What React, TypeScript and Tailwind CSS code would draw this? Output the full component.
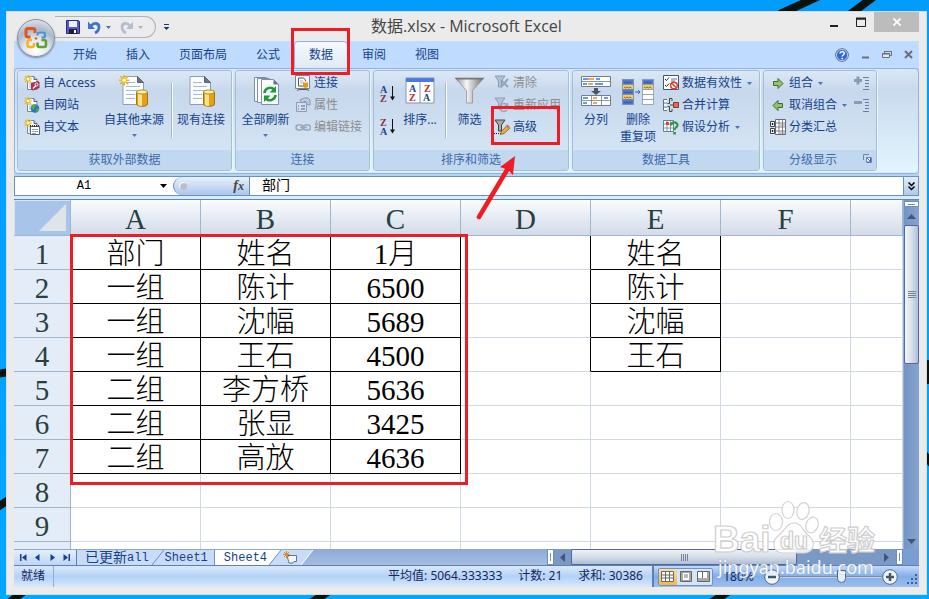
import type { ReactNode } from "react";
import { clsx } from "clsx";

// =============================================================================
// Spreadsheet window — title bar, ribbon, formula bar, grid, status bar
// =============================================================================

const UI_FONT = "font-['Noto_Sans','Noto_Sans_CJK_SC',sans-serif]";
const CELL_FONT = "font-['Liberation_Serif','Noto_Sans_CJK_SC',serif]";
const MONO_FONT = "font-['Liberation_Mono','Noto_Sans_CJK_SC',monospace]";

const TABS = ["开始", "插入", "页面布局", "公式", "数据", "审阅", "视图"];
const COLUMNS = ["A", "B", "C", "D", "E", "F", ""];

const ROWS: string[][] = [
  ["部门", "姓名", "1月", "", "姓名"],
  ["一组", "陈计", "6500", "", "陈计"],
  ["一组", "沈幅", "5689", "", "沈幅"],
  ["一组", "王石", "4500", "", "王石"],
  ["二组", "李方桥", "5636"],
  ["二组", "张显", "3425"],
  ["二组", "高放", "4636"],
  [],
  [],
  [],
];

// ---------------------------------------------------------------------------
// Icons
// ---------------------------------------------------------------------------

function Caret({ className = "text-[#4a76b5]" }: { className?: string }) {
  return (
    <svg width="5" height="3" viewBox="0 0 5 3" className={clsx("shrink-0", className)} aria-hidden>
      <path d="M0 0h5L2.5 3z" fill="currentColor" />
    </svg>
  );
}

function Spark() {
  return (
    <g stroke="#e9b81c" strokeWidth="1.2">
      <path d="M4 0v8M0 4h8M1 1l6 6M7 1L1 7" />
      <circle cx="4" cy="4" r="1.4" fill="#fff9c0" stroke="none" />
    </g>
  );
}

function SmallPage({ kind }: { kind: "access" | "web" | "text" }) {
  return (
    <svg width="16" height="16" viewBox="0 0 16 16" aria-hidden>
      <path d="M4 1.5h6l3 3v10H3.5V4z" fill="#fff" stroke="#77869c" />
      <path d="M10 1.5v3h3" fill="#c8d3e2" stroke="#56647a" />
      <path d="M5 8h5M5 10h5M5 12h4" stroke="#9fb0c8" />
      <Spark />
      {kind === "access" && (
        <g>
          <path d="M7 8l7-2 1.5 1v6L9 15.500l-2-1z" fill="#a8324e" />
          <path d="M9 13.500l3-3" stroke="#fff" strokeWidth="1.3" />
          <circle cx="12.5" cy="9.5" r="1.5" fill="none" stroke="#fff" />
        </g>
      )}
      {kind === "web" && (
        <g>
          <circle cx="11" cy="11.5" r="4.3" fill="#2f73c4" />
          <path d="M7.5 9.500c2-3 5-2 5-1s-2 1-2 3-2 1-3 0zM12 12l3-1c0 2-1 3.500-3 4z" fill="#4db044" />
        </g>
      )}
      {kind === "text" && (
        <g>
          <path d="M6.5 7.500h9v8h-9z" fill="#fff" stroke="#56647a" />
          <path d="M6 7h10" stroke="#333" strokeWidth="2" strokeDasharray="1 1" />
          <path d="M8 10.500h6M8 12.500h6M8 14.500h4" stroke="#8fa0b8" />
        </g>
      )}
    </svg>
  );
}

function DatabasePage({ spark = false }: { spark?: boolean }) {
  return (
    <svg width="32" height="32" viewBox="0 0 32 32" aria-hidden>
      <path d="M5 1.500h14.500l6 6V29.500H5z" fill="#fbfcff" stroke="#8d9db5" />
      <path d="M19.500 1.500v6h6z" fill="#66758c" stroke="#56647a" />
      <path d="M8 7.500h9M8 11.500h14M8 15.500h14M8 19.500h9M8 23.500h9" stroke="#a9b9d2" />
      <path d="M18.500 17v12c0 3 11 3 11 0V17z" fill="#e2a01b" stroke="#a8720c" />
      <path d="M20 18v12c1 1 3 1 4 1V18z" fill="#fbe08a" />
      <ellipse cx="24" cy="17" rx="5.5" ry="2" fill="#fff0ae" stroke="#c18a16" />
      {spark && (
        <g transform="translate(1 0) scale(1.3)">
          <Spark />
        </g>
      )}
    </svg>
  );
}

function RefreshAllIcon() {
  return (
    <svg width="32" height="32" viewBox="0 0 32 32" aria-hidden>
      <g fill="#fbfcff" stroke="#7f8fa8">
        <path d="M4.500 2.500h12l4 4v20h-16z" />
        <path d="M7.500 3.500h12l4 4v20h-16z" />
        <path d="M11.500 4.500h12l5 5v20h-17z" />
      </g>
      <path d="M23.500 4.500v5h5z" fill="#66758c" />
      <g fill="none" stroke="#1f9a3a" strokeWidth="2.6">
        <path d="M14.500 18a5.500 5.500 0 0 1 9.500-3.500" />
        <path d="M25.500 20a5.500 5.500 0 0 1-9.500 3.500" />
      </g>
      <path d="M26 11v6.500h-6.500zM14 27v-6.500h6.500z" fill="#1f9a3a" />
    </svg>
  );
}

function ConnectionsIcon() {
  return (
    <svg width="16" height="16" viewBox="0 0 16 16" aria-hidden>
      <path d="M.5.5h14v13H.5z" fill="#f4f7fc" stroke="#73839c" />
      <path d="M3.500 3h5l2 2v6h-7z" fill="#fff" stroke="#555" />
      <path d="M5 6h3M5 8h3" stroke="#9cb0cf" />
      <path d="M8 7h5v5c-1 1-4 1-5 0z" fill="#dd9b18" />
      <ellipse cx="10.5" cy="7" rx="2.5" ry="1" fill="#ffe89a" />
      <path d="M2 15.500l2-1h8l2 1" fill="none" stroke="#555" />
    </svg>
  );
}

function PropertiesIcon() {
  return (
    <svg width="16" height="16" viewBox="0 0 16 16" aria-hidden>
      <path d="M1.500 5.500h10v9h-10z" fill="#d5dfee" stroke="#8c9cb8" />
      <path d="M3 9h1M6 9h4M3 12h1M6 12h4" stroke="#7b8cab" strokeWidth="1.5" />
      <path d="M5 3l4-2h4l2 2v5h-2l-3-4-3 2z" fill="#bccbe1" stroke="#8797b4" />
    </svg>
  );
}

function LinkIcon() {
  return (
    <svg width="16" height="16" viewBox="0 0 16 16" aria-hidden fill="none" stroke="#98a6bd" strokeWidth="1.6">
      <rect x="1" y="6" width="7" height="5" rx="2.5" />
      <rect x="8.5" y="6" width="7" height="5" rx="2.5" />
      <path d="M5 8.500h7" />
    </svg>
  );
}

function SortIcon({ descending = false }: { descending?: boolean }) {
  const top = descending ? "Z" : "A";
  const bottom = descending ? "A" : "Z";
  return (
    <svg width="18" height="20" viewBox="0 0 18 20" className="overflow-visible" aria-hidden>
      <g className="font-['Liberation_Serif',serif] text-[10px] font-bold">
        <text x="0" y="9" fill={descending ? "#8e2c3c" : "#1f4490"}>{top}</text>
        <text x="0" y="18" fill={descending ? "#1f4490" : "#8e2c3c"}>{bottom}</text>
      </g>
      <path d="M12.500 2v13" stroke="#111" />
      <path d="M10 12.500h5l-2.500 4z" fill="#111" />
    </svg>
  );
}

function SortDialogIcon() {
  return (
    <svg width="32" height="28" viewBox="0 0 32 28" aria-hidden>
      <path d="M2 1h28v25H2z" fill="#fff" stroke="#8494b0" />
      <path d="M2 1h28v4H2z" fill="#4c7be0" />
      <path d="M16 5v21" stroke="#8494b0" />
      <g className="font-['Liberation_Serif',serif] text-[10px] font-bold">
        <text x="5" y="15" fill="#1f4490">A</text>
        <text x="5" y="24" fill="#b02c2c">Z</text>
        <text x="20" y="15" fill="#b02c2c">Z</text>
        <text x="19" y="24" fill="#1f4490">A</text>
      </g>
    </svg>
  );
}

function FunnelIcon() {
  return (
    <svg width="32" height="32" viewBox="0 0 32 32" aria-hidden>
      <defs>
        <linearGradient id="funnel" x1="0" x2="1">
          <stop offset="0" stopColor="#8b8b8b" />
          <stop offset=".4" stopColor="#f6f6f6" />
          <stop offset="1" stopColor="#6b6b6b" />
        </linearGradient>
      </defs>
      <path d="M1 3h29L18.500 15.500V28h-6V15.500z" fill="url(#funnel)" stroke="#8a8a8a" strokeWidth=".7" />
      <path d="M1 3h29l-1.500 1.500h-26z" fill="#777" />
    </svg>
  );
}

function SmallFunnel({ kind }: { kind: "clear" | "reapply" | "advanced" }) {
  const live = kind === "advanced";
  return (
    <svg width="16" height="16" viewBox="0 0 16 16" aria-hidden>
      <path
        d="M1 1h10L7.500 6v6h-3V6z"
        fill={live ? "#a8a8a8" : "#b4c2d8"}
        stroke={live ? "#444" : "#8b9ab3"}
      />
      {kind === "clear" && <path d="M7 5l7 7M14 4l-7 8" stroke="#94a3bb" strokeWidth="2" />}
      {kind === "reapply" && (
        <path d="M13 8a4 4 0 1 0 0 5M13.500 6v3h-3" fill="none" stroke="#98a7bf" strokeWidth="1.6" />
      )}
      {live && (
        <g>
          <path d="M0 14.500h8" stroke="#222" strokeDasharray="1 1" />
          <path d="M7 13l5.500-6 3 2.500-5.500 5-3.500 1z" fill="#efad3c" stroke="#7a5525" strokeWidth=".8" />
          <path d="M12 7l1.500-1.500 2.500 2.500-1 1.500z" fill="#d86868" />
        </g>
      )}
    </svg>
  );
}

function SplitColumnsIcon() {
  return (
    <svg width="32" height="32" viewBox="0 0 32 32" aria-hidden>
      <g fill="#fff" stroke="#6c7d98">
        <path d="M1.500 1.500h29v10h-29zM1.500 20.500h29v10h-29z" />
        <path d="M1.500 6.500h29M1.500 25.500h29M11.500 20.500v10M21.500 20.500v10" strokeWidth=".8" />
      </g>
      <path d="M3 4h5M16 4h4M3 9h4M15 9h8M3 23h5M24 23h4M3 28h4" stroke="#3d74de" strokeWidth="1.3" />
      <path d="M8 4h6M8 9h5M13 23h4M13 28h4" stroke="#ec8a1c" strokeWidth="1.3" />
      <path d="M14 13h4v3h3l-5 4-5-4h3z" fill="#4f555e" />
    </svg>
  );
}

function DuplicatesIcon() {
  const left = ["#5277cf", "#f8cf52", "#5277cf", "#f8cf52", "#5277cf"];
  const right = ["#5277cf", "#f8cf52", "#fff", "#fff", "#fff"];
  return (
    <svg width="34" height="32" viewBox="0 0 34 32" aria-hidden>
      {left.map((fill, i) => (
        <rect key={`l${i}`} x="1.5" y={4.5 + i * 5} width="11" height="5" fill={fill} stroke="#7788ad" strokeWidth=".8" />
      ))}
      {right.map((fill, i) => (
        <rect key={`r${i}`} x="21.5" y={4.5 + i * 5} width="11" height="5" fill={fill} stroke="#8797b4" strokeWidth=".8" />
      ))}
      {left.map((_, i) => (
        <path key={`z${i}`} d={`M3 ${7 + i * 5}l1.500 1 1.500-1 1.500 1 1.500-1 1.500 1`} fill="none" stroke="#2a4486" strokeWidth=".7" />
      ))}
      <path d="M23 7l1.500 1 1.500-1 1.500 1 1.500-1 1.500 1M23 12l1.500 1 1.500-1 1.500 1 1.500-1 1.500 1" fill="none" stroke="#2a4486" strokeWidth=".7" />
      <path d="M14 17h5M17 15l2 2-2 2" fill="none" stroke="#3d5fae" />
    </svg>
  );
}

function ValidationIcon() {
  return (
    <svg width="16" height="16" viewBox="0 0 16 16" aria-hidden>
      <path d="M.5.5h15v14H.5z" fill="#fff" stroke="#44546c" />
      <path d="M2 4l1.500 1.500L6 2.500M2 10l1.500 1.500L6 8.500" fill="none" stroke="#333" />
      <path d="M8 4h6M8 6h4" stroke="#5d7296" />
      <circle cx="11" cy="10.5" r="3.3" fill="#fff" stroke="#e0382a" strokeWidth="1.5" />
      <path d="M9 8.500l4 4" stroke="#e0382a" strokeWidth="1.5" />
    </svg>
  );
}

function ConsolidateIcon() {
  return (
    <svg width="16" height="16" viewBox="0 0 16 16" aria-hidden>
      <path d="M4 2.500H.5v11H4M.5 6H4M.5 10H4" fill="#fff" stroke="#5f6f88" />
      <path d="M9 1.500H6.500v5H4.500M9 14.500H6.500v-5H4.500M9 1.500V4M9 14.500V12" fill="none" stroke="#444" />
      <path d="M7 8h3" stroke="#444" />
      <path d="M10.500 5.500h5v5h-5z" fill="#ef6848" stroke="#7e392c" />
    </svg>
  );
}

function WhatIfIcon() {
  return (
    <svg width="16" height="16" viewBox="0 0 16 16" aria-hidden>
      <path d="M.5 1.500h10v11H.5z" fill="#fff" stroke="#6c7d98" />
      <path d="M.5 5h10M.5 9h10M4 1.500v11M7.500 1.500v11" stroke="#6c7d98" strokeWidth=".8" />
      <path d="M3 3h3v3H3z" fill="#e0462c" />
      <path d="M8 6.500c0-4 6.500-4 6.500-.5 0 2.500-3 2.500-3 5" fill="none" stroke="#2e963c" strokeWidth="2.2" />
      <path d="M10.300 13h2.500v2.500h-2.500z" fill="#2e963c" />
    </svg>
  );
}

function GreenArrow({ left = false }: { left?: boolean }) {
  return (
    <svg width="16" height="16" viewBox="0 0 16 16" className={clsx(left && "-scale-x-100")} aria-hidden>
      <path d="M3.500 6.500h4.500V3.500L13 8.500l-5 5v-3H3.500z" fill="#8cc760" stroke="#45683a" />
    </svg>
  );
}

function SubtotalIcon() {
  return (
    <svg width="16" height="16" viewBox="0 0 16 16" aria-hidden>
      <path d="M5.500.5h10v15h-10z" fill="#fff" stroke="#5c6c85" />
      <path d="M5.500 4h10M5.500 8h10M5.500 12h10M9 .5v15M12.500.5v15" stroke="#5c6c85" strokeWidth=".8" />
      <path d="M.5 2.500h4v5h-4zM.5 9.500h4v5h-4z" fill="#fff" stroke="#444" />
      <path d="M1.500 5h2M2.500 4v2M1.500 12h2M2.500 11v2" stroke="#222" />
      <path d="M10 6h2M13 6h2M10 14h2M13 14h2" stroke="#ee7a2a" />
    </svg>
  );
}

function DetailIcon({ minus = false }: { minus?: boolean }) {
  return (
    <svg width="16" height="16" viewBox="0 0 16 16" aria-hidden>
      <path d="M0 5.500h8" stroke="#8b9ab8" strokeWidth="3" />
      {!minus && <path d="M4 1.500v8" stroke="#8b9ab8" strokeWidth="3" />}
      <path d="M9 2.500h6M11 5.500h4M11 8.500h4M11 11.500h4M9 14.500h6" stroke="#6c7c9c" />
    </svg>
  );
}

// ---------------------------------------------------------------------------
// Title bar and tabs
// ---------------------------------------------------------------------------

function OfficeButton() {
  return (
    <button
      aria-label="Office"
      className="absolute left-[10px] top-[7px] z-10 flex size-[38px] items-center justify-center rounded-full border border-[#8792a4] bg-[radial-gradient(circle_at_50%_85%,#ffffff_0%,#dfe6ee_35%,#aab8cb_60%,#f4f7fa_100%)] shadow-[0_1px_2px_rgba(0,0,0,0.4)]"
    >
      <svg width="24" height="24" viewBox="0 0 24 24" fill="none" strokeWidth="3" aria-hidden>
        <path d="M6.500 11H4Q2 11 2 9V4.500q0-2 2-2h5q2 0 2 2V7" stroke="#e0561d" />
        <path d="M13.500 9.500V8.500q0-2 2-2H19q2 0 2 2v1.500q0 1.500-2 1.500h-1.500" stroke="#4a93d9" strokeWidth="2.2" />
        <path d="M8 14H5.500q-2 0-2 2v3q0 2 2 2H8q2 0 2-2v-2" stroke="#f6b51e" strokeWidth="2.4" />
        <path d="M13.500 16.500V19q0 2 2 2H20q2 0 2-2v-3q0-2-2-2h-2.500" stroke="#5ea32a" strokeWidth="2.6" />
        <path d="M12 11v3M10.500 12.500h3" stroke="#d8642a" strokeWidth="1" />
      </svg>
    </button>
  );
}

function TitleBar() {
  return (
    <header className="flex h-[29px] items-start">
      <div className="flex min-w-0 flex-1 items-center pt-1">
        <div className="ml-[41px] flex h-[22px] w-[101px] items-center rounded-r-full border border-l-0 border-[#b0b3b8] bg-[#ececee] pl-[10px]">
          <button aria-label="保存">
            <svg width="16" height="16" viewBox="0 0 16 16" aria-hidden>
              <path d="M1.500 1.500h12l1 1v12h-13z" fill="#5a5ac4" stroke="#2a2a80" />
              <path d="M4 2h8v6H4z" fill="#eaf0fb" />
              <path d="M4 10h8v5H4z" fill="#20202c" />
              <path d="M9 11h2v3H9z" fill="#fff" />
            </svg>
          </button>
          <button aria-label="撤消" className="ml-[6px]">
            <svg width="15" height="15" viewBox="0 0 15 15" aria-hidden>
              <path d="M4 6c3-4 8-3 8 1 0 3-2 5-4 6" fill="none" stroke="#3f74cd" strokeWidth="2.8" />
              <path d="M1 1.500v7.500h7z" fill="#3f74cd" />
            </svg>
          </button>
          <Caret className="ml-[4px] text-[#4a76b5]" />
          <button aria-label="恢复" className="ml-[8px]">
            <svg width="15" height="15" viewBox="0 0 15 15" className="-scale-x-100" aria-hidden>
              <path d="M4 6c3-4 8-3 8 1 0 3-2 5-4 6" fill="none" stroke="#b3bfd0" strokeWidth="2.8" />
              <path d="M1 1.500v7.500h7z" fill="#b3bfd0" />
            </svg>
          </button>
          <Caret className="ml-[4px] text-[#b4b4b4]" />
        </div>
        <button aria-label="自定义快速访问工具栏" className="ml-[7px]">
          <svg width="7" height="7" viewBox="0 0 7 7" aria-hidden>
            <path d="M1 .5h5" stroke="#1e3a6e" />
            <path d="M.5 3h6l-3 3z" fill="#1e3a6e" />
          </svg>
        </button>
      </div>
      <h1 className="font-['Open_Sans','Noto_Sans_CJK_SC',sans-serif] text-[16px] leading-[29px] text-[#444]">
        数据.xlsx - Microsoft Excel
      </h1>
      <div className="flex flex-1 justify-end">
        <button aria-label="最小化" className="flex h-[20px] w-[27px] items-center justify-center">
          <svg width="10" height="12" viewBox="0 0 10 12" aria-hidden>
            <path d="M1 10h8" stroke="#222" strokeWidth="2" />
          </svg>
        </button>
        <button aria-label="最大化" className="flex h-[20px] w-[27px] items-center justify-center">
          <svg width="10" height="10" viewBox="0 0 10 10" aria-hidden>
            <path d="M.5 2h9v7.500h-9z" fill="none" stroke="#222" />
            <path d="M0 1.500h10" stroke="#222" strokeWidth="2" />
          </svg>
        </button>
        <button aria-label="关闭" className="flex h-[20px] w-[45px] items-center justify-center bg-[#bcbcbc]">
          <svg width="8" height="8" viewBox="0 0 8 8" aria-hidden>
            <path d="M.5.5l7 7M7.500.5l-7 7" stroke="#fff" strokeWidth="1.7" />
          </svg>
        </button>
      </div>
    </header>
  );
}

function RibbonTabs() {
  return (
    <nav className="flex h-[27px] items-end gap-px bg-[#bfdbff] pl-[45px] pr-[6px]">
      {TABS.map((tab) => (
        <button
          key={tab}
          className={clsx(
            "relative h-[26px] px-3.5 text-[12px] text-[#15428b]",
            tab === "数据" &&
              "z-[1] rounded-t-[4px] bg-linear-to-b from-[#f6faff] to-[#dfe9f5] shadow-[0_0_0_1px_#8db2e3]"
          )}
        >
          {tab}
        </button>
      ))}
      <div className="flex flex-1 items-center justify-end gap-[12px] self-stretch">
        <button aria-label="帮助">
          <svg width="14" height="14" viewBox="0 0 14 14" aria-hidden>
            <circle cx="7" cy="7" r="6.3" fill="#2f66d0" stroke="#5c6f92" />
            <circle cx="7" cy="7" r="5.5" fill="none" stroke="#dce8fb" strokeWidth=".8" />
            <path d="M5 5.500C5 3 9.300 3 9.300 5.500 9.300 7 7.200 7 7.200 8.500M7.200 9.800v1.400" fill="none" stroke="#fff" strokeWidth="1.5" />
          </svg>
        </button>
        <button aria-label="最小化工作簿">
          <svg width="9" height="9" viewBox="0 0 9 9" aria-hidden>
            <path d="M1 7.500h7" stroke="#6b6f78" strokeWidth="2" />
          </svg>
        </button>
        <button aria-label="还原工作簿">
          <svg width="10" height="9" viewBox="0 0 10 9" aria-hidden>
            <path d="M2.500 4V1.500h7v4H8" fill="none" stroke="#6b6f78" />
            <path d="M.5 3.500h7v4h-7z" fill="#dfe9f8" stroke="#6b6f78" />
            <path d="M2 1.500h8M.5 4h7" stroke="#6b6f78" />
          </svg>
        </button>
        <button aria-label="关闭工作簿">
          <svg width="9" height="9" viewBox="0 0 9 9" aria-hidden>
            <path d="M1 1l7 7M8 1L1 8" stroke="#6b6f78" strokeWidth="2" />
          </svg>
        </button>
      </div>
    </nav>
  );
}

// ---------------------------------------------------------------------------
// Ribbon
// ---------------------------------------------------------------------------

interface GroupProps {
  title: string;
  className: string;
  launcher?: boolean;
  children: ReactNode;
}

function Group({ title, className, launcher, children }: GroupProps) {
  return (
    <section
      className={clsx(
        "flex shrink-0 flex-col overflow-hidden rounded-[3px] border border-[#a0bfdf] bg-linear-to-b from-[#dde8f5] via-[#c7d8ed] via-20% to-[#d8e8f5] shadow-[1px_1px_0_#eef6fd]",
        className
      )}
    >
      <div className="flex h-[80px] items-start">{children}</div>
      <div className="flex h-[20px] items-center bg-[#c1d8f0]">
        <h2 className={clsx("flex-1 text-center text-[12px] leading-[20px] text-[#3e6aaa]", launcher && "pr-px")}>{title}</h2>
        {launcher && (
          <button aria-label={`${title}选项`} className="mb-1 mr-1">
            <svg width="9" height="9" viewBox="0 0 9 9" aria-hidden>
              <path d="M.5 6V.5H6" fill="none" stroke="#6688b8" />
              <path d="M3.500 3.500h5v5h-5z" fill="#fff" stroke="#6688b8" />
              <path d="M4 4l3 3M7.500 4v4H4" stroke="#456a9e" fill="none" />
            </svg>
          </button>
        )}
      </div>
    </section>
  );
}

interface SmallButtonProps {
  icon: ReactNode;
  label: string;
  disabled?: boolean;
  menu?: boolean;
}

function SmallButton({ icon, label, disabled, menu }: SmallButtonProps) {
  return (
    <button
      disabled={disabled}
      className={clsx(
        "flex h-[22px] items-center gap-[3px] whitespace-nowrap text-[12px]",
        disabled ? "text-[#8d8d8d]" : "text-[#15428b]"
      )}
    >
      {icon}
      {label}
      {menu && <Caret className="ml-[2px] text-[#4a76b5]" />}
    </button>
  );
}

interface LargeButtonProps {
  icon: ReactNode;
  label: string;
  second?: string;
  menu?: boolean;
  className?: string;
}

function LargeButton({ icon, label, second, menu, className }: LargeButtonProps) {
  return (
    <button
      className={clsx(
        "flex shrink-0 flex-col items-center whitespace-nowrap pt-[4px] text-[12px] leading-[17px] text-[#15428b]",
        className
      )}
    >
      <span className="flex h-[36px] items-start">{icon}</span>
      {label}
      {second && <span>{second}</span>}
      {menu && <Caret className="mt-[6px] text-[#4a76b5]" />}
    </button>
  );
}

function Divider() {
  return <div className="mt-[12px] h-[55px] w-[2px] shrink-0 border-l border-[#9fb8d8] bg-white" />;
}

function Ribbon() {
  return (
    <div className="flex h-[106px] gap-[3px] overflow-hidden rounded-[4px] border border-[#8db2e3] bg-linear-to-b from-[#dce7f4] via-[#c9daee] via-20% to-[#e3f5ff] px-[2px] pb-[2px] pt-px shadow-[inset_0_-1px_0_#c8f4ff]">
      <Group title="获取外部数据" className="w-[215px]">
        <div className="w-[82px] shrink-0 pl-[6px] pt-px">
          <SmallButton icon={<SmallPage kind="access" />} label="自 Access" />
          <SmallButton icon={<SmallPage kind="web" />} label="自网站" />
          <SmallButton icon={<SmallPage kind="text" />} label="自文本" />
        </div>
        <LargeButton icon={<DatabasePage spark />} label="自其他来源" menu className="w-[68px]" />
        <div className="w-[3px]" />
        <Divider />
        <LargeButton icon={<DatabasePage />} label="现有连接" className="w-[56px]" />
      </Group>

      <Group title="连接" className="w-[135px]">
        <LargeButton icon={<RefreshAllIcon />} label="全部刷新" menu className="w-[59px]" />
        <div className="pt-px">
          <SmallButton icon={<ConnectionsIcon />} label="连接" />
          <SmallButton icon={<PropertiesIcon />} label="属性" disabled />
          <SmallButton icon={<LinkIcon />} label="编辑链接" disabled />
        </div>
      </Group>

      <Group title="排序和筛选" className="w-[196px]">
        <div className="flex flex-col gap-[13px] pl-[6px] pt-[13px]">
          <button aria-label="升序"><SortIcon /></button>
          <button aria-label="降序"><SortIcon descending /></button>
        </div>
        <LargeButton
          icon={<span className="pt-[2px]"><SortDialogIcon /></span>}
          label="排序..."
          className="w-[44px]"
        />
        <div className="w-[3px]" />
        <Divider />
        <LargeButton icon={<FunnelIcon />} label="筛选" className="w-[45px]" />
        <div className="pl-[2px] pt-px">
          <SmallButton icon={<SmallFunnel kind="clear" />} label="清除" disabled />
          <SmallButton icon={<SmallFunnel kind="reapply" />} label="重新应用" disabled />
          <SmallButton icon={<SmallFunnel kind="advanced" />} label="高级" />
        </div>
      </Group>

      <Group title="数据工具" className="w-[188px]">
        <LargeButton icon={<SplitColumnsIcon />} label="分列" className="w-[46px]" />
        <LargeButton icon={<DuplicatesIcon />} label="删除" second="重复项" className="w-[38px]" />
        <div className="pl-[6px] pt-px">
          <SmallButton icon={<ValidationIcon />} label="数据有效性" menu />
          <SmallButton icon={<ConsolidateIcon />} label="合并计算" />
          <SmallButton icon={<WhatIfIcon />} label="假设分析" menu />
        </div>
      </Group>

      <Group title="分级显示" className="w-[114px]" launcher>
        <div className="flex-1 pl-[6px] pt-px">
          <SmallButton icon={<GreenArrow />} label="组合" menu />
          <SmallButton icon={<GreenArrow left />} label="取消组合" menu />
          <SmallButton icon={<SubtotalIcon />} label="分类汇总" />
        </div>
        <div className="flex flex-col pr-[6px] pt-px">
          <button aria-label="显示明细数据" className="flex h-[22px] items-center"><DetailIcon /></button>
          <button aria-label="隐藏明细数据" className="flex h-[22px] items-center"><DetailIcon minus /></button>
        </div>
      </Group>
    </div>
  );
}

function FormulaBar() {
  return (
    <div className="border-b border-[#6088b4] bg-[#dcecff] pb-[3px]">
      <div className={clsx("flex h-[20px] border border-[#6593bd] bg-white text-black", MONO_FONT)}>
        <input
          aria-label="名称框"
          defaultValue="A1"
          className="w-[138px] shrink-0 bg-transparent text-center text-[12px] outline-none"
        />
        <button aria-label="名称列表" className="flex w-[20px] items-center justify-center">
          <svg width="7" height="4" viewBox="0 0 7 4" aria-hidden>
            <path d="M0 0h7L3.500 4z" fill="#000" />
          </svg>
        </button>
        <div className="flex w-[77px] items-center justify-between rounded-l-full border-l border-r border-[#6593bd] bg-linear-to-b from-[#e9f1fc] to-[#abc6ec] pl-[5px] pr-[5px]">
          <span className="size-[8px] rounded-full bg-[#b9bfc9] shadow-[inset_1px_1px_1px_#fff]" />
          <button
            aria-label="插入函数"
            className="font-['Liberation_Serif',serif] text-[14px] font-bold italic leading-none text-[#444]"
          >
            f<span className="text-[12px]">x</span>
          </button>
        </div>
        <input
          aria-label="编辑栏"
          defaultValue="部门"
          className="min-w-0 flex-1 bg-transparent pl-[12px] text-[14px] outline-none"
        />
        <button
          aria-label="展开编辑栏"
          className="flex w-[15px] items-center justify-center border-l border-[#6593bd] bg-linear-to-b from-[#e4eefb] to-[#b0c8ea]"
        >
          <svg width="7" height="9" viewBox="0 0 7 9" fill="none" stroke="#000" strokeWidth="1.5" aria-hidden>
            <path d="M.5.5l3 3 3-3M.5 4.500l3 3 3-3" />
          </svg>
        </button>
      </div>
    </div>
  );
}

// ---------------------------------------------------------------------------
// Grid
// ---------------------------------------------------------------------------

function isFramed(row: number, col: number) {
  return (col < 3 && row < 7) || (col === 4 && row < 4);
}

function Sheet() {
  return (
    <table className="w-full table-fixed border-separate border-spacing-0">
      <colgroup>
        <col className="w-[57px]" />
        {COLUMNS.map((c, i) => (
          <col key={i} className={c ? "w-[130px]" : ""} />
        ))}
      </colgroup>
      <thead>
        <tr>
          <th className="h-[36px] border-b border-r border-[#9eb6ce] bg-[#a9c4e9] p-0 shadow-[inset_1px_1px_0_#d5e4f5]">
            <svg width="27" height="27" viewBox="0 0 27 27" className="ml-auto mr-[4px]" aria-hidden>
              <path d="M27 0v27H0z" fill="#dfe3ea" />
            </svg>
          </th>
          {COLUMNS.map((c, i) => (
            <th
              key={i}
              scope="col"
              className="h-[36px] border-b border-r border-[#9eb6ce] bg-linear-to-b from-[#f9fcfd] to-[#d3dbe9] p-0 pt-[4px] text-[29px] font-normal leading-[31px] text-[#27413e]"
            >
              {c}
            </th>
          ))}
        </tr>
      </thead>
      <tbody>
        {ROWS.map((row, r) => (
          <tr key={r}>
            <th
              scope="row"
              className="h-[34px] border-b border-r border-[#9eb6ce] bg-[#e4ecf7] p-0 pt-[4px] text-[29px] font-normal leading-[29px] text-[#27413e]"
            >
              {r < 9 ? r + 1 : ""}
            </th>
            {COLUMNS.map((_, c) => (
              <td
                key={c}
                className={clsx(
                  "h-[34px] border-b border-r p-0 pt-[4px] text-center text-[29px] font-light leading-[29px] text-black",
                  isFramed(r, c) ? "border-b-black" : "border-b-[#d0d7e5]",
                  isFramed(r, c) || isFramed(r, c + 1) ? "border-r-black" : "border-r-[#d0d7e5]"
                )}
              >
                {row[c]}
              </td>
            ))}
          </tr>
        ))}
      </tbody>
    </table>
  );
}

function VerticalScrollbar() {
  return (
    <div className="flex w-[16px] shrink-0 flex-col items-center border-l border-[#8fb0dc] bg-linear-to-r from-[#7694c2] to-[#86a4d0]">
      <div className="mt-px flex h-[6px] w-full items-center justify-center border border-[#6c8fbe] bg-white">
        <span className="h-px w-[7px] bg-[#6c8fbe]" />
      </div>
      <button aria-label="向上滚动" className="flex h-[18px] items-center">
        <svg width="9" height="5" viewBox="0 0 9 5" aria-hidden><path d="M0 5h9L4.500 0z" fill="#45527a" /></svg>
      </button>
      <div className="w-full flex-1">
        <div className="flex h-[45%] w-full flex-col items-center justify-center gap-px rounded-[2px] border border-[#52699c] bg-linear-to-r from-[#f2f5f9] via-[#d8e0ea] to-[#adc0da]">
          {[0, 1, 2, 3].map((i) => (
            <span key={i} className="h-px w-[8px] bg-[#75829a]" />
          ))}
        </div>
      </div>
      <button aria-label="向下滚动" className="flex h-[16px] items-center">
        <svg width="9" height="5" viewBox="0 0 9 5" aria-hidden><path d="M0 0h9L4.500 5z" fill="#45527a" /></svg>
      </button>
    </div>
  );
}

function NavArrow({ label, d }: { label: string; d: string }) {
  return (
    <button aria-label={label} className="flex h-full items-center">
      <svg width="7" height="7" viewBox="0 0 7 7" aria-hidden><path d={d} fill="#15428b" /></svg>
    </button>
  );
}

function Slant() {
  return (
    <svg width="12" height="15" viewBox="0 0 12 15" className="shrink-0" aria-hidden>
      <path d="M0 15L12 0v15z" fill="#c8dcf7" />
      <path d="M0 15L12 0" stroke="#6f92c4" />
    </svg>
  );
}

function SheetTabs() {
  return (
    <div className="flex h-[17px] border-b border-[#5c80b2]">
      <div className="flex min-w-0 flex-[3] border-t border-[#8ba9d0] bg-linear-to-b from-[#8fabd6] to-[#a5bde0]">
        <div className="flex w-[62px] shrink-0 items-center justify-between bg-linear-to-b from-[#e4effd] to-[#bdd5f5] px-[6px]">
          <NavArrow label="第一个工作表" d="M0 0h1.500v7H0zM6.500 0v7L2 3.500z" />
          <NavArrow label="上一个工作表" d="M5.500 0v7L1 3.500z" />
          <NavArrow label="下一个工作表" d="M1.500 0v7L6 3.500z" />
          <NavArrow label="最后一个工作表" d="M.5 0v7L5 3.500zM5.500 0H7v7H5.500z" />
        </div>
        <div className={clsx("flex shrink-0 items-start border-l border-[#5c80b2] bg-[#c8dcf7] text-[12px] leading-[16px] text-[#15428b]", MONO_FONT)}>
          <button className="flex h-[15px] items-center pl-[8px] pr-[3px] text-[14px]">
            已更新<span className="text-[12px]">all</span>
          </button>
          <Slant />
          <button className="flex h-[15px] items-center pl-px">Sheet1</button>
          <span className="w-[6px]" />
          <button className="flex h-[15px] items-center border-l border-[#6f92c4] bg-white pl-[9px] pr-[2px] text-[#15428b]">Sheet4</button>
          <span className="bg-white"><Slant /></span>
          <button aria-label="插入工作表" className="flex h-[15px] w-[18px] items-center justify-center">
            <svg width="15" height="13" viewBox="0 0 15 13" aria-hidden>
              <path d="M4 4.500h9.500v6H11l-1 1.500H6z" fill="#f2f5fa" stroke="#66758c" />
              <path d="M3.500 0v7M0 3.500h7M1 1l5 5M6 1L1 6" stroke="#e08a1c" />
            </svg>
          </button>
        </div>
        <svg width="14" height="15" viewBox="0 0 14 15" className="shrink-0" aria-hidden>
          <path d="M0 0h14L2 15H0z" fill="#c8dcf7" />
          <path d="M14 0L2 15" stroke="#fff" />
        </svg>
      </div>
      <div className="flex min-w-0 flex-[2] items-stretch bg-[#7a99c5]">
        <div className="flex w-[7px] items-center justify-center border border-[#6c8fbe] bg-white">
          <span className="h-[8px] w-px bg-[#6c8fbe]" />
        </div>
        <button aria-label="向左滚动" className="flex w-[17px] items-center justify-center">
          <svg width="5" height="9" viewBox="0 0 5 9" aria-hidden><path d="M5 0v9L0 4.500z" fill="#45527a" /></svg>
        </button>
        <div className="flex-1">
          <div className="flex h-full w-[74%] items-center justify-center gap-px rounded-[2px] border border-[#52699c] bg-linear-to-b from-[#eef2f7] via-[#d5dde8] to-[#aebfd6]">
            {[0, 1, 2, 3].map((i) => (
              <span key={i} className="h-[7px] w-px bg-[#75829a]" />
            ))}
          </div>
        </div>
        <button aria-label="向右滚动" className="flex w-[20px] items-center justify-center">
          <svg width="5" height="9" viewBox="0 0 5 9" aria-hidden><path d="M0 0v9l5-4.500z" fill="#45527a" /></svg>
        </button>
        <div className="flex w-[7px] items-center justify-center border border-[#6c8fbe] bg-white">
          <span className="h-[8px] w-px bg-[#6c8fbe]" />
        </div>
      </div>
      <div className="w-[16px] shrink-0 bg-[#7b9ed2]" />
    </div>
  );
}

// ---------------------------------------------------------------------------
// Status bar
// ---------------------------------------------------------------------------

function ZoomButton({ label, plus = false }: { label: string; plus?: boolean }) {
  return (
    <button aria-label={label} className="shrink-0">
      <svg width="16" height="16" viewBox="0 0 16 16" aria-hidden>
        <circle cx="8" cy="8" r="7.3" fill="#eef4fb" stroke="#4f6890" />
        <path d="M4 8h8" stroke="#44546c" strokeWidth="2.5" />
        {plus && <path d="M8 4v8" stroke="#44546c" strokeWidth="2.5" />}
      </svg>
    </button>
  );
}

function StatusBar() {
  return (
    <footer className="flex h-[21px] items-stretch bg-linear-to-b from-[#dbe9fb] via-[#b3d2f7] via-50% to-[#d9e8fb] text-[12px] leading-[20px] text-[#15265c]">
      <span className="w-[40px] border-r border-[#8db0dc] pl-[7px]">就绪</span>
      <div className="flex flex-1 justify-end gap-[16px] pr-[9px]">
        <span>平均值: 5064.333333</span>
        <span>计数: 21</span>
        <span>求和: 30386</span>
      </div>
      <div className="flex items-center border-l-2 border-[#5c80b2] bg-linear-to-b from-[#c4dafa] via-[#82aee8] via-50% to-[#9dc0ee] pl-[4px] pr-px">
        <div className="flex h-[18px] w-[55px] overflow-hidden rounded-[2px] border border-[#6f92c4] bg-[#d6e4f6]">
          <button aria-label="普通" className="flex flex-1 items-center justify-center bg-linear-to-b from-[#fbe0a0] to-[#f6b44b]">
            <svg width="13" height="11" viewBox="0 0 13 11" aria-hidden>
              <path d="M.5.5h12v10H.5zM.5 4h12M.5 7h12M4.500.5v10M8.500.5v10" fill="#fff" stroke="#6b6b60" />
            </svg>
          </button>
          <button aria-label="页面布局视图" className="flex flex-1 items-center justify-center">
            <svg width="12" height="11" viewBox="0 0 12 11" aria-hidden>
              <path d="M.5.5h11v10H.5z" fill="#a8a8a8" stroke="#666" />
              <path d="M3 2h6v7H3z" fill="#fff" />
              <path d="M4 4h4M4 6h4" stroke="#777" />
            </svg>
          </button>
          <button aria-label="分页预览" className="flex flex-1 items-center justify-center">
            <svg width="13" height="11" viewBox="0 0 13 11" aria-hidden>
              <path d="M.5.5h12v10H.5z" fill="#a8a8a8" stroke="#666" />
              <path d="M1 1h4v6H1zM6 1h4v6H6z" fill="#fff" />
              <path d="M5.500 1v6" stroke="#666" />
            </svg>
          </button>
        </div>
        <span className="w-[51px] text-center">180%</span>
        <ZoomButton label="缩小" />
        <input
          type="range"
          aria-label="显示比例"
          min={0}
          max={100}
          defaultValue={61}
          className="h-[14px] w-[102px] appearance-none bg-[linear-gradient(#4f6f9f,#e6eefa)] bg-[length:100%_2px] bg-center bg-no-repeat [&::-webkit-slider-thumb]:h-[13px] [&::-webkit-slider-thumb]:w-[9px] [&::-webkit-slider-thumb]:appearance-none [&::-webkit-slider-thumb]:rounded-b-[5px] [&::-webkit-slider-thumb]:border [&::-webkit-slider-thumb]:border-[#4f6890] [&::-webkit-slider-thumb]:bg-[#e6eefa]"
        />
        <ZoomButton label="放大" plus />
        <svg width="11" height="11" viewBox="0 0 11 11" className="ml-[9px] mt-[6px] shrink-0" aria-hidden>
          <path d="M8 0h2v2H8zM4 4h2v2H4zM8 4h2v2H8zM0 8h2v2H0zM4 8h2v2H4zM8 8h2v2H8z" fill="#3e5f97" />
        </svg>
      </div>
    </footer>
  );
}

// ---------------------------------------------------------------------------
// Desktop, annotations, watermark
// ---------------------------------------------------------------------------

function Wallpaper() {
  return (
    <svg className="absolute inset-0 h-full w-full" viewBox="0 0 929 599" preserveAspectRatio="none" aria-hidden>
      <g stroke="#07140d" strokeWidth="8">
        <path d="M780 14L828-8M848 16L880-8" />
        <path d="M5 606L28 588M306 606L334 588M706 606L734 588" />
        <path d="M-4 374L10 372M-4 508L10 499M922 452L932 464" />
        <path d="M928 360v24" />
      </g>
    </svg>
  );
}

function Highlights() {
  return (
    <div className="pointer-events-none absolute inset-0 z-20">
      <div className="absolute left-[291px] top-[28px] h-[47px] w-[59px] border-[3px] border-[#ee1c25]" />
      <div className="absolute left-[491px] top-[106px] h-[39px] w-[69px] border-[3px] border-[#ee1c25]" />
      <div className="absolute left-[70px] top-[234px] h-[251px] w-[398px] border-[3px] border-[#ee1c25]" />
      <svg width="50" height="72" viewBox="0 0 50 72" className="absolute left-[470px] top-[150px]" aria-hidden>
        <path d="M9 67L37 20" stroke="#ee1c25" strokeWidth="4.5" strokeLinecap="round" />
        <path d="M45 6l-2 19-5-5-8-3z" fill="#ee1c25" />
      </svg>
    </div>
  );
}

function Watermark() {
  return (
    <div className="pointer-events-none absolute bottom-[22px] right-[50px] z-20 w-[166px] text-white">
      <svg width="166" height="56" viewBox="0 0 166 56" className="block overflow-visible" aria-hidden>
        <g fill="#fff" fillOpacity=".85" stroke="#d2d2d2" strokeWidth="1.2">
          <ellipse cx="63" cy="21" rx="6.500" ry="8.5" />
          <ellipse cx="75" cy="9" rx="6" ry="8.5" />
          <ellipse cx="90" cy="10" rx="6" ry="8.5" transform="rotate(12 90 10)" />
          <ellipse cx="99" cy="24" rx="6" ry="8" transform="rotate(20 99 24)" />
          <path d="M81 22c8 0 9 9 15 13 7 6 5 16-4 17H69c-9-1-11-11-4-17 6-4 8-13 16-13z" />
        </g>
        <g fill="#fff" stroke="#cecece" strokeWidth="1.2" className="font-['Liberation_Sans','Noto_Sans_CJK_SC',sans-serif] font-bold">
          <text x="0" y="51" className="text-[37px]">Bai</text>
          <text x="67" y="48" className="text-[23px]">du</text>
          <text x="106" y="50" className="text-[28px]">经验</text>
        </g>
      </svg>
      <div className="whitespace-nowrap text-center text-[18px] leading-[20px] opacity-90 [text-shadow:0_0_2px_#8d9db5]">
        jingyan.baidu.com
      </div>
    </div>
  );
}

export default function App() {
  return (
    <div
      className={clsx(
        "relative flex h-screen flex-col overflow-hidden bg-linear-to-b from-[#009dff] to-[#00a8ff] pb-[4px] pl-[6px] pr-[2px] pt-[11px]",
        UI_FONT
      )}
    >
      <Wallpaper />
      <main className="relative flex min-h-0 flex-1 flex-col border border-[#dadada] bg-[#ebebeb] px-[7px] pb-[7px]">
        <OfficeButton />
        <TitleBar />
        <RibbonTabs />
        <div className="bg-[#b9d2f4] pb-[2px]">
          <Ribbon />
        </div>
        <FormulaBar />
        <div className="flex min-h-0 flex-1 bg-white">
          <div className={clsx("min-w-0 flex-1 overflow-hidden", CELL_FONT)}>
            <Sheet />
          </div>
          <VerticalScrollbar />
        </div>
        <SheetTabs />
        <StatusBar />
      </main>
      <Highlights />
      <Watermark />
    </div>
  );
}
